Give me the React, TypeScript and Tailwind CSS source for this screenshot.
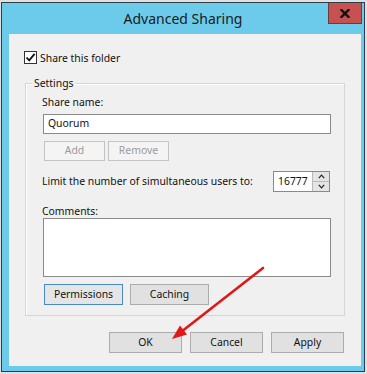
import React from "react";

const font = { fontFamily: '"Noto Sans", "Open Sans", sans-serif' };

function Btn({ children, className = "", disabled = false }: { children: React.ReactNode; className?: string; disabled?: boolean }) {
  return (
    <div
      className={
        "flex items-center justify-center border text-[10.4px] " +
        (disabled
          ? "border-[#c4c4c4] bg-[#f4f4f4] text-[#9a9a9a] "
          : "border-[#acacac] bg-[#e1e1e1] text-[#111] ") +
        className
      }
    >
      {children}
    </div>
  );
}

export default function App() {
  return (
    <div className="w-[367px] h-[374px] bg-[#dde1e4] relative overflow-hidden" style={font}>
      <div className="ml-[1px] mt-[2px] w-[364px] h-[370px] border border-[#2f3d47] bg-[#6ccbea] flex flex-col">
        {/* title bar */}
        <div className="h-[31px] relative flex items-center justify-center">
          <span className="text-[14px] text-[#1a1a1a] -mt-[1px]">Advanced Sharing</span>
          <div className="absolute right-[2px] top-0 w-[34px] h-[21px] bg-[#c75050] border border-[#6b3a3a] border-t-0 flex items-center justify-center">
            <svg width="10" height="9" viewBox="0 0 10 9">
              <path d="M1.5 1 L8.5 8 M8.5 1 L1.5 8" stroke="#111" strokeWidth="2.4" strokeLinecap="square" />
            </svg>
          </div>
        </div>
        {/* client */}
        <div className="ml-[7px] w-[352px] h-[332px] bg-[#f0f0f0] flex flex-col text-[10.4px] text-[#111]">
          <div className="mt-[17px] ml-[15px] flex items-center h-[13px]">
            <div className="w-[13px] h-[13px] border border-[#333] bg-white flex items-center justify-center">
              <svg width="11" height="11" viewBox="0 0 11 11">
                <path d="M1.5 5.5 L4.2 8.3 L9.6 1.8" stroke="#111" strokeWidth="1.8" fill="none" />
              </svg>
            </div>
            <span className="ml-[3px] leading-[14px]">Share this folder</span>
          </div>

          {/* group box */}
          <div className="relative mt-[19px] ml-[16px] w-[320px] border border-[#d5d5d5] shadow-[inset_1px_1px_0_#ffffff] flex flex-col pl-[16px] pb-[10px]">
            <span className="absolute -top-[8px] left-[6px] bg-[#f0f0f0] px-[2px] leading-[14px]">Settings</span>
            <div className="mt-[10px] leading-[16px]">Share name:</div>
            <div className="mt-[4px] ml-[1px] w-[288px] h-[20px] border border-[#8a8a8a] bg-white flex items-center pl-[4px]">
              Quorum
            </div>
            <div className="mt-[7px] ml-[2px] flex gap-[3px]">
              <Btn disabled className="w-[61px] h-[20px]">Add</Btn>
              <Btn disabled className="w-[61px] h-[20px]">Remove</Btn>
            </div>
            <div className="mt-[10px] w-[288px] flex items-center justify-between h-[21px]">
              <span className="whitespace-nowrap">Limit the number of simultaneous users to:</span>
              <div className="flex h-[21px] border border-[#8a8a8a] bg-white">
                <div className="w-[38px] flex items-center pl-[4px]">16777</div>
                <div className="w-[17px] flex flex-col border-l border-[#b9b9b9]">
                  <div className="flex-1 bg-[#e4e4e4] border-b border-[#b9b9b9] flex items-center justify-center">
                    <svg width="7" height="5" viewBox="0 0 7 5"><path d="M0.8 4.2 L3.5 1.2 L6.2 4.2" stroke="#222" strokeWidth="1.2" fill="none" /></svg>
                  </div>
                  <div className="flex-1 bg-[#e4e4e4] flex items-center justify-center">
                    <svg width="7" height="5" viewBox="0 0 7 5"><path d="M0.8 0.8 L3.5 3.8 L6.2 0.8" stroke="#222" strokeWidth="1.2" fill="none" /></svg>
                  </div>
                </div>
              </div>
            </div>
            <div className="mt-[12px] leading-[14px]">Comments:</div>
            <div className="ml-[1px] w-[288px] h-[59px] border border-[#8a8a8a] bg-white" />
            <div className="mt-[7px] ml-[2px] flex gap-[7px]">
              <Btn className="w-[79px] h-[21px] !border-[#4a8ac4] !bg-[#e5e5e5]">Permissions</Btn>
              <Btn className="w-[79px] h-[21px]">Caching</Btn>
            </div>
          </div>

          <div className="mt-[16px] ml-[100px] flex gap-[8px]">
            <Btn className="w-[73px] h-[21px]">OK</Btn>
            <Btn className="w-[73px] h-[21px]">Cancel</Btn>
            <Btn className="w-[73px] h-[21px]">Apply</Btn>
          </div>
        </div>
      </div>

      {/* red annotation arrow */}
      <svg className="absolute left-0 top-0 pointer-events-none" width="367" height="374" viewBox="0 0 367 374">
        <line x1="263" y1="268" x2="181" y2="332" stroke="#e01818" strokeWidth="2.6" strokeLinecap="round" />
        <polygon points="172,339 180,325.5 187,334.5" fill="#e01818" />
      </svg>
    </div>
  );
}
